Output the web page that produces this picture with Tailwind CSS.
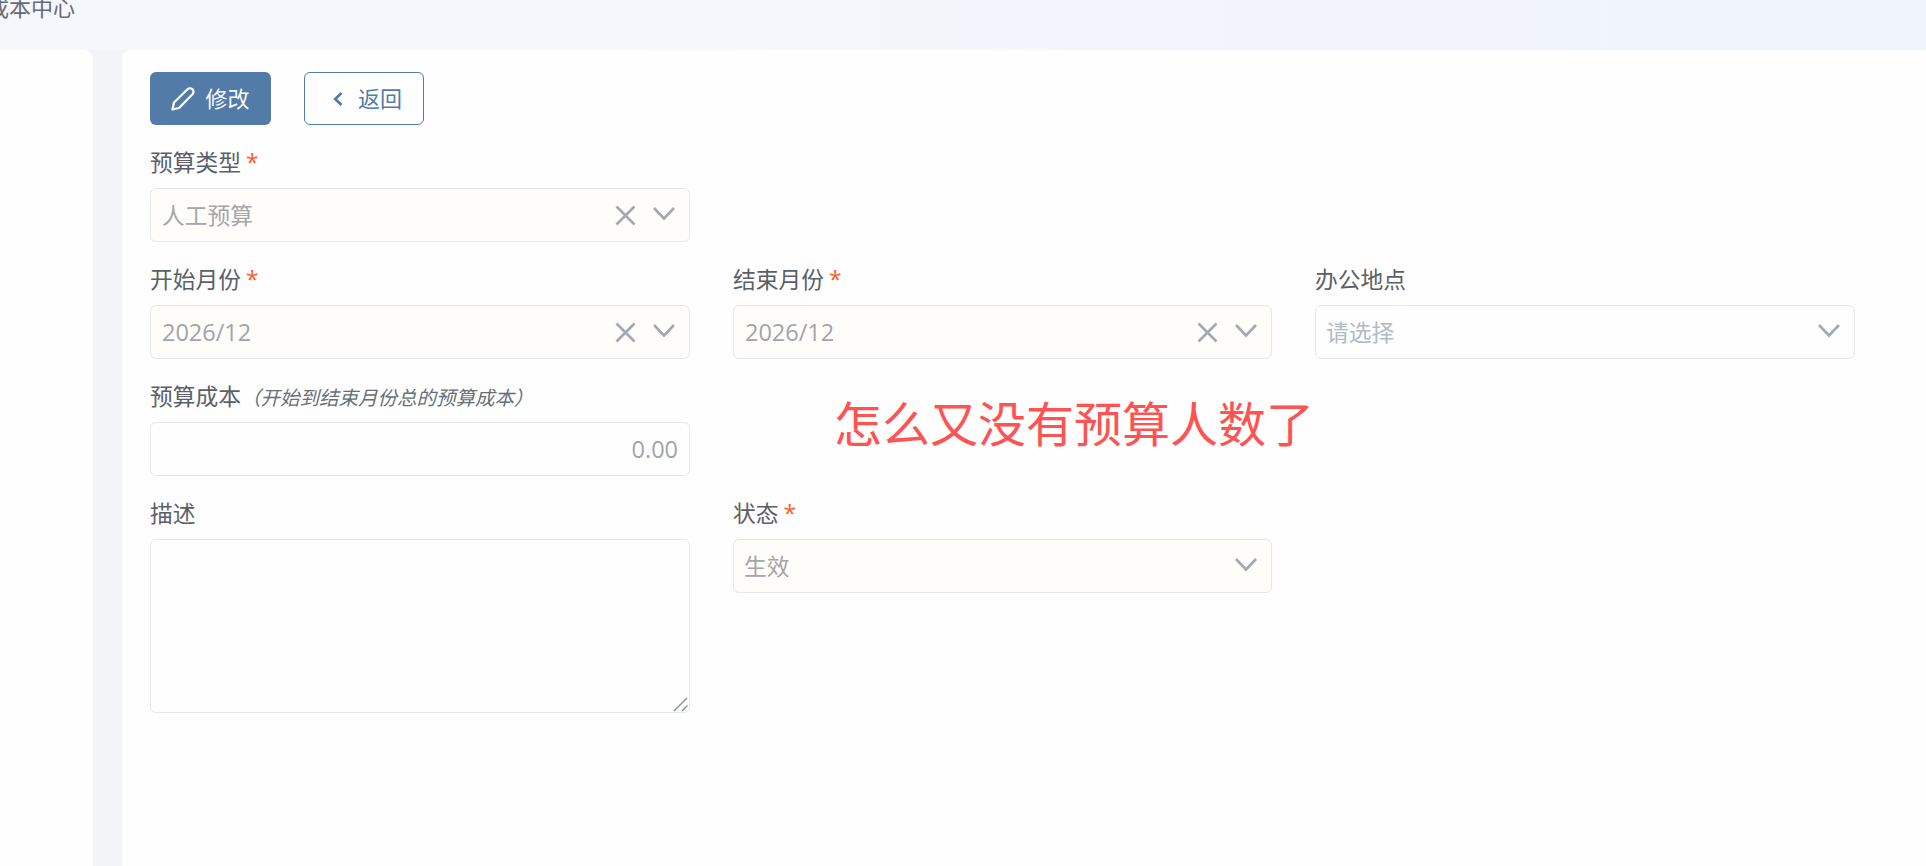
<!DOCTYPE html>
<html lang="zh">
<head>
<meta charset="utf-8">
<script src="https://cdn.jsdelivr.net/npm/@tailwindcss/browser@4"></script>
</head>
<body class="m-0 overflow-hidden">
<div class="relative w-[1926px] h-[866px] overflow-hidden flex flex-col bg-[#f2f4f8] font-['Open_Sans','Noto_Sans_CJK_SC',sans-serif] text-[22.75px]">
  <header class="h-[50px] shrink-0 overflow-hidden bg-gradient-to-r from-[#f5f7fb] to-[#f0f5fc] text-[#656c74] text-[22px]">
    <div class="-mt-[9px] -ml-[13px] leading-[32px]">成本中心</div>
  </header>
  <div class="flex-1 flex gap-[29px]">
    <aside class="w-[93px] bg-[#fefeff] rounded-tr-[9px]"></aside>
    <main class="flex-1 bg-[#fefeff] rounded-tl-[9px] pt-[22px] pl-[28px]">
      <div class="flex gap-[33px] text-[22px]">
        <button class="w-[121px] h-[53px] rounded-[6px] bg-[#537ba8] text-[#f8fafc] flex items-center justify-center gap-[10px]">
          <svg class="w-[24px] h-[24px]" viewBox="0 0 24 24" fill="none" stroke="currentColor" stroke-width="2.3" stroke-linejoin="round" stroke-linecap="round"><path d="M1.5 22.5 3 15.5 16.5 2.3a3.6 3.6 0 0 1 5 0 3.6 3.6 0 0 1 0 5L8 21Z"/></svg>
          <span>修改</span>
        </button>
        <button class="w-[120px] h-[53px] rounded-[6px] border border-[#537ba8] bg-[#fefeff] text-[#537ba8] flex items-center justify-start pl-[28px] gap-[15px]">
          <svg class="w-[10px] h-[14px]" viewBox="0 0 10 14" fill="none" stroke="currentColor" stroke-width="2.6"><path d="M8.5 1 2.2 7 8.5 13"/></svg>
          <span>返回</span>
        </button>
      </div>
      <form class="mt-[19px] grid grid-cols-[540px_539px_540px] gap-x-[43px] gap-y-[19px] items-start text-[#5a6068]">
        <div class="col-start-1">
          <label class="h-[39px] mb-[5px] flex items-center">预算类型<span class="ml-[5px] text-[#ff5a1f]">*</span></label>
          <div class="h-[54px] rounded-[6px] border border-[#e4e7ec] bg-[#fffdf9] flex items-center pl-[11px] pr-[14px] text-[#a3a6aa]">
            <span class="flex-1 pt-[2px]">人工预算</span>
            <svg class="w-[21px] h-[21px] text-[#a2a9b2]" viewBox="0 0 21 21" fill="none" stroke="currentColor" stroke-width="2.6"><path d="M1.5 1.5 19.5 19.5M19.5 1.5 1.5 19.5"/></svg>
            <svg class="ml-[17px] w-[22px] h-[15px] text-[#a2a9b2] -mt-[3px]" viewBox="0 0 22 15" fill="none" stroke="currentColor" stroke-width="2.6"><path d="M1 2 11 12.5 21 2"/></svg>
          </div>
        </div>

        <div class="col-start-1">
          <label class="h-[39px] mb-[5px] flex items-center">开始月份<span class="ml-[5px] text-[#ff5a1f]">*</span></label>
          <div class="h-[54px] rounded-[6px] border border-[#e4e7ec] bg-[#fffdf9] flex items-center pl-[11px] pr-[14px] text-[#a0a5ab]">
            <span class="flex-1 pt-[2px] text-[23.5px]">2026/12</span>
            <svg class="w-[21px] h-[21px] text-[#a2a9b2]" viewBox="0 0 21 21" fill="none" stroke="currentColor" stroke-width="2.6"><path d="M1.5 1.5 19.5 19.5M19.5 1.5 1.5 19.5"/></svg>
            <svg class="ml-[17px] w-[22px] h-[15px] text-[#a2a9b2] -mt-[3px]" viewBox="0 0 22 15" fill="none" stroke="currentColor" stroke-width="2.6"><path d="M1 2 11 12.5 21 2"/></svg>
          </div>
        </div>
        <div>
          <label class="h-[39px] mb-[5px] flex items-center">结束月份<span class="ml-[5px] text-[#ff5a1f]">*</span></label>
          <div class="h-[54px] rounded-[6px] border border-[#e4e7ec] bg-[#fffdf9] flex items-center pl-[11px] pr-[14px] text-[#a0a5ab]">
            <span class="flex-1 pt-[2px] text-[23.5px]">2026/12</span>
            <svg class="w-[21px] h-[21px] text-[#a2a9b2]" viewBox="0 0 21 21" fill="none" stroke="currentColor" stroke-width="2.6"><path d="M1.5 1.5 19.5 19.5M19.5 1.5 1.5 19.5"/></svg>
            <svg class="ml-[17px] w-[22px] h-[15px] text-[#a2a9b2] -mt-[3px]" viewBox="0 0 22 15" fill="none" stroke="currentColor" stroke-width="2.6"><path d="M1 2 11 12.5 21 2"/></svg>
          </div>
        </div>
        <div>
          <label class="h-[39px] mb-[5px] flex items-center">办公地点</label>
          <div class="h-[54px] rounded-[6px] border border-[#e4e7ec] bg-[#fefeff] flex items-center pl-[10px] pr-[14px] text-[#b4bac2]">
            <span class="flex-1 pt-[2px]">请选择</span>
            <svg class="w-[22px] h-[15px] text-[#a2a9b2] -mt-[3px]" viewBox="0 0 22 15" fill="none" stroke="currentColor" stroke-width="2.6"><path d="M1 2 11 12.5 21 2"/></svg>
          </div>
        </div>

        <div class="col-start-1">
          <label class="h-[39px] mb-[5px] flex items-center whitespace-nowrap">预算成本<span class="text-[19.5px] italic text-[#686f77]">（开始到结束月份总的预算成本）</span></label>
          <div class="h-[54px] rounded-[6px] border border-[#e4e7ec] bg-[#fefeff] flex items-center justify-end pr-[11px] text-[#a0a5ab] text-[23.5px]"><span class="pt-[2px]">0.00</span></div>
        </div>

        <div class="col-start-1">
          <label class="h-[39px] mb-[5px] flex items-center">描述</label>
          <div class="relative">
            <textarea class="block w-full h-[174px] rounded-[6px] border border-[#e4e7ec] bg-[#fefeff] resize-none"></textarea>
            <svg class="absolute right-[2px] bottom-[1px] w-[15px] h-[15px] text-[#85888c]" viewBox="0 0 15 15" fill="none" stroke="currentColor" stroke-width="1.3"><path d="M1 14 14 1M9 14 14.5 8.5"/></svg>
          </div>
        </div>
        <div>
          <label class="h-[39px] mb-[5px] flex items-center">状态<span class="ml-[5px] text-[#ff5a1f]">*</span></label>
          <div class="h-[54px] rounded-[6px] border border-[#e4e7ec] bg-[#fffdf9] flex items-center pl-[10px] pr-[14px] text-[#a3a6aa]">
            <span class="flex-1 pt-[2px]">生效</span>
            <svg class="w-[22px] h-[15px] text-[#a2a9b2] -mt-[3px]" viewBox="0 0 22 15" fill="none" stroke="currentColor" stroke-width="2.6"><path d="M1 2 11 12.5 21 2"/></svg>
          </div>
        </div>
      </form>
    </main>
  </div>
  <div class="absolute left-[834px] top-[389px] text-[48px] leading-[70px] text-[#ff5252] whitespace-nowrap">怎么又没有预算人数了</div>
</div>
</body>
</html>
